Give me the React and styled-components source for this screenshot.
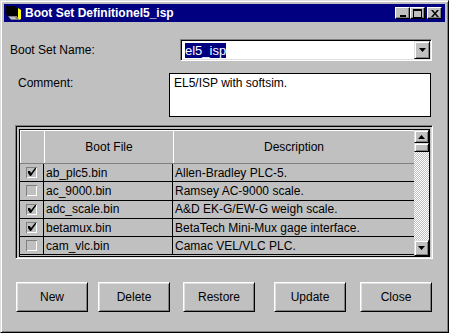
import React from "react";
import styled, { createGlobalStyle } from "styled-components";

const GlobalStyle = createGlobalStyle`
  html, body { margin: 0; padding: 0; }
  body {
    background: #c0c0c0;
    font-family: "Liberation Sans", Arial, sans-serif;
    font-size: 12px;
    color: #000;
  }
`;

const files = [
  { name: "ab_plc5.bin", desc: "Allen-Bradley PLC-5.", on: true },
  { name: "ac_9000.bin", desc: "Ramsey AC-9000 scale.", on: false },
  { name: "adc_scale.bin", desc: "A&D EK-G/EW-G weigh scale.", on: true },
  { name: "betamux.bin", desc: "BetaTech Mini-Mux gage interface.", on: true },
  { name: "cam_vlc.bin", desc: "Camac VEL/VLC PLC.", on: false },
];

// left gap before each button, as spaced in the dialog
const buttons = [
  { label: "New", gap: 0 },
  { label: "Delete", gap: 10 },
  { label: "Restore", gap: 13 },
  { label: "Update", gap: 19 },
  { label: "Close", gap: 14 },
];

const App = () => {
  return (
    <>
      <GlobalStyle />
      <Window>
        <TitleBar>
          <TitleIcon />
          <TitleText>Boot Set Definitionel5_isp</TitleText>
          <Controls>
            <CtlBtn>
              <svg width="8" height="8" viewBox="0 0 8 8">
                <rect x="1" y="6" width="6" height="2" fill="#000" />
              </svg>
            </CtlBtn>
            <CtlBtn $gap>
              <svg width="9" height="9" viewBox="0 0 9 9">
                <rect x="0.5" y="1.5" width="8" height="7" fill="none" stroke="#000" />
                <rect x="0" y="0" width="9" height="2" fill="#000" />
              </svg>
            </CtlBtn>
            <CtlBtn>
              <svg width="8" height="7" viewBox="0 0 8 7">
                <path d="M0 0h2l2 2.5L6 0h2L5 3.5 8 7H6L4 4.5 2 7H0l3-3.5z" fill="#000" />
              </svg>
            </CtlBtn>
          </Controls>
        </TitleBar>

        <NameRow>
          <Label>Boot Set Name:</Label>
          <Combo>
            <ComboText>
              <Selected>el5_isp</Selected>
            </ComboText>
            <DropBtn>
              <svg width="7" height="4" viewBox="0 0 7 4">
                <path d="M0 0h7L3.5 4z" fill="#000" />
              </svg>
            </DropBtn>
          </Combo>
        </NameRow>

        <CommentRow>
          <CommentLabel>Comment:</CommentLabel>
          <CommentBox>EL5/ISP with softsim.</CommentBox>
        </CommentRow>

        <TableFrame>
          <Grid>
            <TableArea>
              <HeadRow>
                <HeadCell $w={24} />
                <HeadCell $w={129}>Boot File</HeadCell>
                <HeadCell $w={241} $last>Description</HeadCell>
              </HeadRow>
              <Rows>
                {files.map((f) => (
                  <Row key={f.name}>
                    <CheckCell>
                      <CheckBox on={f.on} />
                    </CheckCell>
                    <Cell $w={129}>{f.name}</Cell>
                    <Cell $w={241} $last>{f.desc}</Cell>
                  </Row>
                ))}
              </Rows>
            </TableArea>
            <ScrollBar>
              <ScrollBtn>
                <svg width="7" height="4" viewBox="0 0 7 4">
                  <path d="M3.5 0L7 4H0z" fill="#000" />
                </svg>
              </ScrollBtn>
              <Thumb />
              <Track />
              <ScrollBtn $down>
                <svg width="7" height="4" viewBox="0 0 7 4">
                  <path d="M0 0h7L3.5 4z" fill="#000" />
                </svg>
              </ScrollBtn>
            </ScrollBar>
          </Grid>
        </TableFrame>

        <ButtonRow>
          {buttons.map((b) => (
            <Button key={b.label} $gap={b.gap}>{b.label}</Button>
          ))}
        </ButtonRow>
      </Window>
    </>
  );
};

export default App;

const TitleIcon = () => (
  <svg width="16" height="16" viewBox="0 0 16 16" style={{ marginLeft: 1, flexShrink: 0 }}>
    <path d="M1 1h10l1 2v8H3L1 9z" fill="#000" />
    <path d="M3 11h9l2 4H6z" fill="#808080" />
    <path d="M4 12h6l1 2H6z" fill="#c0c0c0" />
    <path d="M12 3h1l3 2v9l-2 1-2-4z" fill="#ffff00" />
    <path d="M12 3h1v9h-1z" fill="#000" />
  </svg>
);

const CheckBox = ({ on }) => (
  <svg width="11" height="11" viewBox="0 0 11 11">
    <rect x="0" y="0" width="11" height="11" fill="#c0c0c0" />
    <path d="M0 0h11v1H1v10H0z" fill="#808080" />
    <path d="M10 1h1v10H1v-1h9z" fill="#fff" />
    {on && <path d="M2 4h2l1 2 4-5h1v1L5 9H4L2 6z" fill="#000" />}
  </svg>
);

const Window = styled.div`
  width: 449px;
  height: 333px;
  box-sizing: border-box;
  border: 1px solid;
  border-color: #dfdfdf #000 #000 #dfdfdf;
  box-shadow: inset 1px 1px #fff, inset -1px -1px #808080;
  padding: 3px;
  background: #c0c0c0;
  display: flex;
  flex-direction: column;
`;

const TitleBar = styled.div`
  height: 18px;
  background: #000080;
  display: flex;
  align-items: center;
  padding: 0 3px 0 0;
  color: #fff;
`;

const TitleText = styled.div`
  font-weight: bold;
  font-size: 12px;
  margin-left: 4px;
  white-space: nowrap;
`;

const Controls = styled.div`
  margin-left: auto;
  display: flex;
  align-items: center;
`;

const CtlBtn = styled.div`
  width: 15px;
  height: 12px;
  box-sizing: border-box;
  background: #c0c0c0;
  border: 1px solid;
  border-color: #fff #000 #000 #fff;
  box-shadow: inset -1px -1px #808080;
  display: flex;
  align-items: center;
  justify-content: center;
  margin-right: ${(p) => (p.$gap ? "2px" : "0")};
`;

const Label = styled.div`
  font-size: 12px;
  line-height: 14px;
  white-space: nowrap;
`;

const NameRow = styled.div`
  display: flex;
  align-items: center;
  margin-top: 17px;
  padding-left: 6px;
`;

const Combo = styled.div`
  margin-left: auto;
  margin-right: 13px;
  width: 252px;
  height: 22px;
  box-sizing: border-box;
  border: 1px solid;
  border-color: #808080 #fff #fff #808080;
  box-shadow: inset 1px 1px #000, inset -1px -1px #dfdfdf;
  padding: 1px;
  background: #fff;
  display: flex;
  align-items: stretch;
`;

const ComboText = styled.div`
  flex: 1;
  display: flex;
  align-items: center;
  padding-left: 3px;
`;

const Selected = styled.span`
  background: #000080;
  color: #fff;
  font-size: 13px;
  line-height: 15px;
`;

const DropBtn = styled.div`
  width: 16px;
  box-sizing: border-box;
  background: #c0c0c0;
  border: 1px solid;
  border-color: #dfdfdf #000 #000 #dfdfdf;
  box-shadow: inset 1px 1px #fff, inset -1px -1px #808080;
  display: flex;
  align-items: center;
  justify-content: center;
`;

const CommentRow = styled.div`
  display: flex;
  align-items: flex-start;
  margin-top: 12px;
  padding-left: 14px;
`;

const CommentLabel = styled(Label)`
  margin-top: 3px;
`;

const CommentBox = styled.div`
  margin-left: auto;
  margin-right: 14px;
  width: 262px;
  height: 44px;
  box-sizing: border-box;
  border: 1px solid #000;
  background: #fff;
  padding: 2px 4px;
  line-height: 14px;
`;

const TableFrame = styled.div`
  margin: 8px 12px 0 11px;
  height: 134px;
  box-sizing: border-box;
  border: 1px solid;
  border-color: #808080 #fff #fff #808080;
  box-shadow: inset 1px 1px #000, inset -1px -1px #dfdfdf;
  padding: 3px 2px 1px 3px;
  display: flex;
`;

const Grid = styled.div`
  flex: 1;
  border: 1px solid #000;
  display: flex;
  overflow: hidden;
`;

const TableArea = styled.div`
  flex: 1;
  display: flex;
  flex-direction: column;
  min-width: 0;
`;

const HeadRow = styled.div`
  display: flex;
  height: 34px;
  box-sizing: border-box;
  border-bottom: 1px solid #808080;
  flex-shrink: 0;
`;

const HeadCell = styled.div`
  width: ${(p) => p.$w}px;
  box-sizing: border-box;
  border-top: 1px solid #fff;
  border-left: 1px solid #fff;
  display: flex;
  align-items: center;
  justify-content: center;
  flex: ${(p) => (p.$last ? "1" : "none")};
`;

const Rows = styled.div`
  flex: 1;
  overflow: hidden;
`;

const Row = styled.div`
  display: flex;
  height: 18.3px;
  box-sizing: border-box;
  border-bottom: 1px solid #000;
`;

const Cell = styled.div`
  width: ${(p) => p.$w}px;
  flex: ${(p) => (p.$last ? "1" : "none")};
  box-sizing: border-box;
  padding-left: 2px;
  display: flex;
  align-items: center;
  white-space: nowrap;
  border-right: ${(p) => (p.$last ? "none" : "1px solid #000")};
`;

const CheckCell = styled.div`
  width: 24px;
  box-sizing: border-box;
  border-right: 1px solid #000;
  display: flex;
  align-items: center;
  justify-content: center;
  padding-right: 1px;
`;

const ScrollBar = styled.div`
  width: 15px;
  display: flex;
  flex-direction: column;
  flex-shrink: 0;
`;

const ScrollBtn = styled.div`
  height: ${(p) => (p.$down ? "16px" : "13px")};
  box-sizing: border-box;
  background: #c0c0c0;
  border: 1px solid;
  border-color: #dfdfdf #000 #000 #dfdfdf;
  box-shadow: inset 1px 1px #fff, inset -1px -1px #808080;
  display: flex;
  align-items: center;
  justify-content: center;
  flex-shrink: 0;
`;

const Thumb = styled(ScrollBtn)`
  height: 9px;
`;

const Track = styled.div`
  flex: 1;
  background: repeating-conic-gradient(#c0c0c0 0 25%, #fff 0 50%) 0 0 / 2px 2px;
`;

const ButtonRow = styled.div`
  display: flex;
  margin-top: 23px;
  padding: 0 13px 0 12px;
`;

const Button = styled.button`
  width: 72px;
  height: 30px;
  margin-left: ${(p) => p.$gap}px;
  box-sizing: border-box;
  background: #c0c0c0;
  border: 1px solid;
  border-color: #fff #000 #000 #fff;
  box-shadow: inset 1px 1px #dfdfdf, inset -1px -1px #808080;
  font-family: "Liberation Sans", Arial, sans-serif;
  font-size: 12px;
  color: #000;
  padding: 0;
`;
